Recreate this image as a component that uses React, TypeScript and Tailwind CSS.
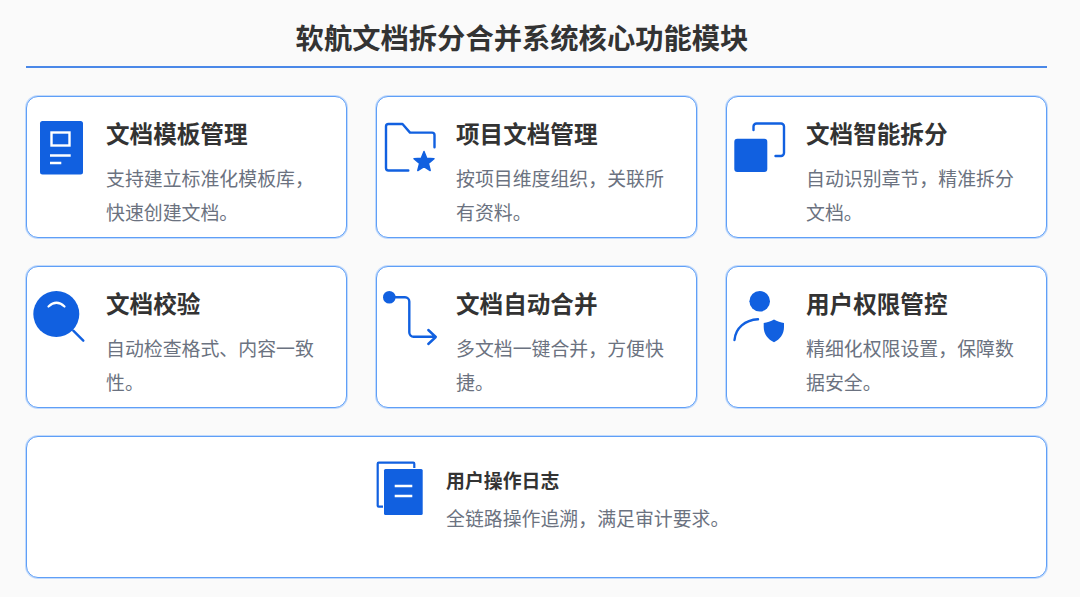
import type { ReactNode } from 'react';

const BLUE = '#1160e0';

const docIcon = (
  <svg width="56" height="56" viewBox="0 0 56 56" fill="none">
    <rect x="8" y="1" width="43" height="53.5" rx="2.5" fill={BLUE} />
    <rect x="19.5" y="12.5" width="18" height="13" stroke="#fff" strokeWidth="2.4" />
    <path d="M18 35.5H38.7M18 43H29.3" stroke="#fff" strokeWidth="2.4" />
  </svg>
);

const folderIcon = (
  <svg width="56" height="56" viewBox="0 0 56 56" fill="none">
    <path
      d="M26.3 50.5H6.5a2.5 2.5 0 0 1-2.5-2.5V6.5A2.5 2.5 0 0 1 6.5 4H20.5L28 12.6H50a2.5 2.5 0 0 1 2.5 2.5V27.3"
      stroke={BLUE}
      strokeWidth="2.4"
      strokeLinejoin="round"
      strokeLinecap="round"
    />
    <polygon
      points="42,31.5 44.7,38.3 52,38.75 46.4,43.4 48.2,50.5 42,46.6 35.8,50.5 37.6,43.4 32,38.75 39.3,38.3"
      fill={BLUE}
      stroke={BLUE}
      strokeWidth="1.5"
      strokeLinejoin="round"
    />
  </svg>
);

const splitIcon = (
  <svg width="56" height="56" viewBox="0 0 56 56" fill="none">
    <rect x="2.3" y="18.7" width="33" height="33.3" rx="3" fill={BLUE} />
    <path
      d="M21.5 10V6.5A3 3 0 0 1 24.5 3.5H49A3 3 0 0 1 52 6.5V33A3 3 0 0 1 49 36H43.5"
      stroke={BLUE}
      strokeWidth="2.4"
      strokeLinecap="round"
    />
  </svg>
);

const searchIcon = (
  <svg width="56" height="56" viewBox="0 0 56 56" fill="none">
    <path d="M41.3 40.7L51.3 50.7" stroke={BLUE} strokeWidth="2.4" strokeLinecap="round" />
    <circle cx="24.3" cy="24" r="23" fill={BLUE} />
    <path d="M16.5 16.5Q24.5 9 32.5 16.5" stroke="#fff" strokeWidth="2.2" strokeLinecap="round" />
  </svg>
);

const mergeIcon = (
  <svg width="56" height="56" viewBox="0 0 56 56" fill="none">
    <circle cx="7.3" cy="7.3" r="6.3" fill={BLUE} />
    <path
      d="M7.3 7.3H23A4.3 4.3 0 0 1 27.3 11.6V42.4A4.3 4.3 0 0 0 31.6 46.8H53.5M46.3 40L53.8 47L46.3 54"
      stroke={BLUE}
      strokeWidth="2.4"
      strokeLinecap="round"
      strokeLinejoin="round"
    />
  </svg>
);

const userIcon = (
  <svg width="56" height="56" viewBox="0 0 56 56" fill="none">
    <circle cx="27.7" cy="11.3" r="10.3" fill={BLUE} />
    <path d="M2.5 50C3.5 38 13 30 26 29.3" stroke={BLUE} strokeWidth="2.4" strokeLinecap="round" />
    <path
      d="M42 29.5C45 31.5 49 32.5 52 33V37C52 44 48 49.5 42 52.3C36 49.5 31.7 44 31.7 37V33C35 32.5 39 31.5 42 29.5Z"
      fill={BLUE}
    />
  </svg>
);

const logIcon = (
  <svg width="56" height="56" viewBox="0 0 56 56" fill="none">
    <rect x="5.7" y="2.7" width="36.6" height="44" rx="1" stroke={BLUE} strokeWidth="2.2" fill="#fff" />
    <rect x="12" y="9" width="38.7" height="46" rx="1.5" fill={BLUE} stroke="#fff" strokeWidth="2" paintOrder="stroke" />
    <path d="M22.7 26H40.3M22.7 36H40.3" stroke="#fff" strokeWidth="2.4" />
  </svg>
);

const modules: { icon: ReactNode; title: string; desc: string }[] = [
  { icon: docIcon, title: '文档模板管理', desc: '支持建立标准化模板库，快速创建文档。' },
  { icon: folderIcon, title: '项目文档管理', desc: '按项目维度组织，关联所有资料。' },
  { icon: splitIcon, title: '文档智能拆分', desc: '自动识别章节，精准拆分文档。' },
  { icon: searchIcon, title: '文档校验', desc: '自动检查格式、内容一致性。' },
  { icon: mergeIcon, title: '文档自动合并', desc: '多文档一键合并，方便快捷。' },
  { icon: userIcon, title: '用户权限管控', desc: '精细化权限设置，保障数据安全。' },
];

function Card({ icon, title, desc }: { icon: ReactNode; title: string; desc: string }) {
  return (
    <div className="flex h-[142px] rounded-xl border border-[#5f9ff7] bg-white pl-[5px] shadow-[0_0_0_1px_#c2dafb]">
      <div className="mt-[23px] h-14 w-14 shrink-0">{icon}</div>
      <div className="ml-[18px] w-[222px] pt-[20px]">
        <h3 className="text-[23.6px] leading-8 font-bold text-[#333333]">{title}</h3>
        <p className="mt-[12px] text-[18.9px] leading-[33.6px] text-[#6b7280]">{desc}</p>
      </div>
    </div>
  );
}

export default function App() {
  return (
    <div className="h-[597px] w-[1080px] overflow-hidden bg-[#fafafa] pt-[18px] pr-[33px] pl-[26px] font-['Noto_Sans_CJK_SC',sans-serif]">
      <h1 className="pr-[29px] text-center text-[28.3px] leading-[38px] font-bold text-[#333333]">
        软航文档拆分合并系统核心功能模块
      </h1>
      <div className="mt-[10px] h-[2px] bg-[#4a88e8]" />
      <div className="mt-[28px] grid grid-cols-[321px_321px_321px] gap-x-[29px] gap-y-[28px]">
        {modules.map((m) => (
          <Card key={m.title} {...m} />
        ))}
        <div className="col-span-3 flex h-[142px] rounded-xl border border-[#5f9ff7] bg-white pl-[345px] shadow-[0_0_0_1px_#c2dafb]">
          <div className="mt-[23px] h-14 w-14 shrink-0">{logIcon}</div>
          <div className="ml-[18px] pt-[30px]">
            <h3 className="text-[18.9px] leading-[26px] font-bold text-[#333333]">用户操作日志</h3>
            <p className="mt-2 text-[18.9px] leading-[34px] text-[#6b7280]">全链路操作追溯，满足审计要求。</p>
          </div>
        </div>
      </div>
    </div>
  );
}
